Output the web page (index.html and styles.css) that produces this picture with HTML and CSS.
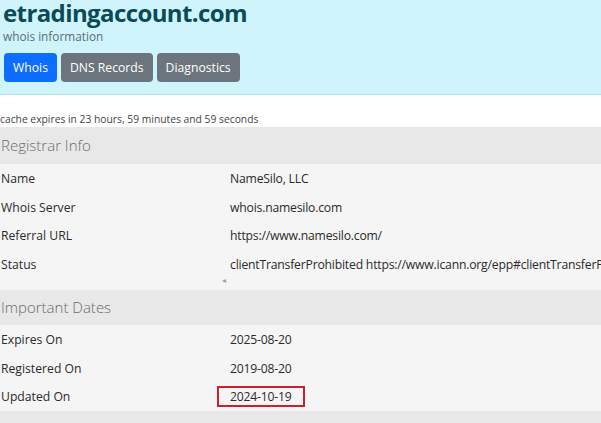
FILE: index.html
```html
<!DOCTYPE html>
<html>
<head>
<meta charset="utf-8">
<link rel="stylesheet" href="styles.css">
</head>
<body>
<header class="hero">
  <h1 class="title">etradingaccount.com</h1>
  <div class="subtitle">whois information</div>
  <nav class="tabs">
    <a class="btn btn-primary">Whois</a>
    <a class="btn btn-secondary">DNS Records</a>
    <a class="btn btn-secondary">Diagnostics</a>
  </nav>
</header>
<div class="cache">cache expires in 23 hours, 59 minutes and 59 seconds</div>
<section class="section">
  <div class="section-head">Registrar Info</div>
  <div class="rows scrolly">
    <div class="row"><div class="label">Name</div><div class="value">NameSilo, LLC</div></div>
    <div class="row"><div class="label">Whois Server</div><div class="value">whois.namesilo.com</div></div>
    <div class="row"><div class="label">Referral URL</div><div class="value">https://www.namesilo.com/</div></div>
    <div class="row"><div class="label">Status</div><div class="value">clientTransferProhibited https://www.icann.org/epp#clientTransferProhibited</div></div>
    <div class="scrollbar"><span class="arrow">◂</span></div>
  </div>
</section>
<section class="section">
  <div class="section-head second">Important Dates</div>
  <div class="rows">
    <div class="row"><div class="label">Expires On</div><div class="value">2025-08-20</div></div>
    <div class="row"><div class="label">Registered On</div><div class="value">2019-08-20</div></div>
    <div class="row"><div class="label">Updated On</div><div class="value"><span class="highlight">2024-10-19</span></div></div>
  </div>
</section>
<section class="section">
  <div class="section-head">&nbsp;</div>
</section>
</body>
</html>
```
FILE: styles.css
```css
html, body {
  margin: 0;
  padding: 0;
  background: #ffffff;
  overflow: hidden;
  font-family: "Open Sans", "Noto Sans", sans-serif;
  color: #212529;
}
.hero {
  background: #cff4fc;
  border-bottom: 1px solid #a8e3ef;
  height: 94px;
  padding: 0 0 0 3px;
  box-sizing: content-box;
}
.title {
  margin: 0;
  font-size: 24px;
  font-weight: 700;
  line-height: 26px;
  color: #0b4a57;
  letter-spacing: -0.6px;
}
.subtitle {
  font-size: 11.8px;
  color: #5b6e74;
  line-height: 18px;
  margin-top: 1px;
}
.tabs {
  display: flex;
  gap: 4px;
  margin-top: 8px;
  padding-left: 1px;
}
.btn {
  display: block;
  height: 29px;
  line-height: 29px;
  padding: 0 9px;
  border-radius: 4px;
  font-size: 12.2px;
  color: #ffffff;
}
.btn-primary { background: #0d6efd; }
.btn-secondary { background: #6c757d; }
.cache {
  font-size: 10.3px;
  color: #444;
  height: 32px;
  line-height: 14px;
  padding-top: 17px;
  box-sizing: border-box;
}
.section-head {
  background: #e8e8e8;
  font-size: 15px;
  color: #6b6b6b;
  height: 37px;
  line-height: 37px;
  padding-left: 1px;
  font-weight: 300;
}
.section-head.second {
  height: 35px;
  line-height: 35px;
}
.rows {
  background: #f5f5f5;
  overflow: hidden;
}
.row {
  display: grid;
  grid-template-columns: 230px 1fr;
  height: 28.5px;
  align-items: center;
  font-size: 12.2px;
  color: #2b2b2b;
  padding-top: 1px;
  box-sizing: border-box;
}
.label { padding-left: 1px; }
.value { white-space: nowrap; letter-spacing: -0.2px; }
.scrollbar {
  height: 12px;
  position: relative;
}
.arrow {
  position: absolute;
  left: 222px;
  top: -4px;
  font-size: 8px;
  color: #a0a0a0;
}
.highlight {
  display: inline-block;
  border: 2px solid #c8232c;
  padding: 0 11px 0 11px;
  margin-left: -13px;
  line-height: 17px;
}
```
